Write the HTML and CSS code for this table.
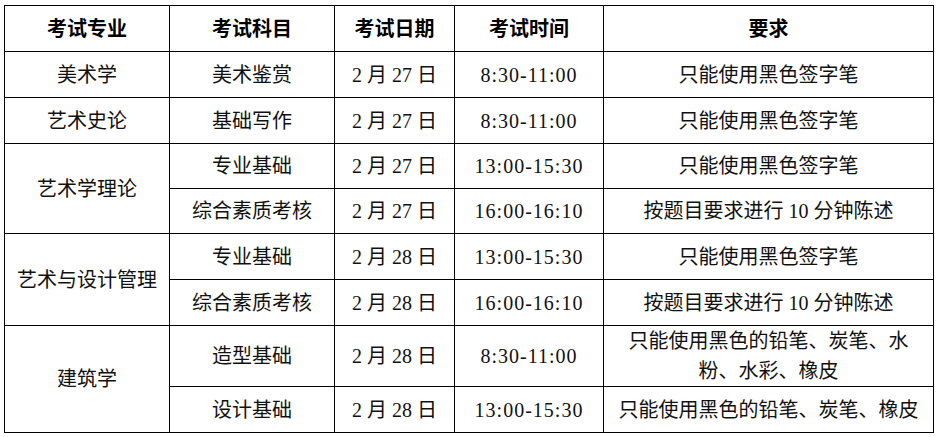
FILE: index.html
```html
<!DOCTYPE html>
<html lang="zh-CN">
<head>
<meta charset="utf-8">
<title>考试安排</title>
<link rel="stylesheet" href="styles.css">
</head>
<body>
<table class="exam">
  <colgroup>
    <col class="c-major">
    <col class="c-subject">
    <col class="c-date">
    <col class="c-time">
    <col class="c-req">
  </colgroup>
  <thead>
    <tr class="r-head">
      <th>考试专业</th>
      <th>考试科目</th>
      <th>考试日期</th>
      <th>考试时间</th>
      <th>要求</th>
    </tr>
  </thead>
  <tbody>
    <tr class="r-46">
      <td>美术学</td>
      <td>美术鉴赏</td>
      <td>2 月 27 日</td>
      <td class="time">8:30-11:00</td>
      <td>只能使用黑色签字笔</td>
    </tr>
    <tr class="r-46">
      <td>艺术史论</td>
      <td>基础写作</td>
      <td>2 月 27 日</td>
      <td class="time">8:30-11:00</td>
      <td>只能使用黑色签字笔</td>
    </tr>
    <tr class="r-45">
      <td rowspan="2">艺术学理论</td>
      <td>专业基础</td>
      <td>2 月 27 日</td>
      <td class="time">13:00-15:30</td>
      <td>只能使用黑色签字笔</td>
    </tr>
    <tr class="r-45">
      <td>综合素质考核</td>
      <td>2 月 27 日</td>
      <td class="time">16:00-16:10</td>
      <td>按题目要求进行 10 分钟陈述</td>
    </tr>
    <tr class="r-46">
      <td rowspan="2">艺术与设计管理</td>
      <td>专业基础</td>
      <td>2 月 28 日</td>
      <td class="time">13:00-15:30</td>
      <td>只能使用黑色签字笔</td>
    </tr>
    <tr class="r-46">
      <td>综合素质考核</td>
      <td>2 月 28 日</td>
      <td class="time">16:00-16:10</td>
      <td>按题目要求进行 10 分钟陈述</td>
    </tr>
    <tr class="r-60">
      <td rowspan="2">建筑学</td>
      <td>造型基础</td>
      <td>2 月 28 日</td>
      <td class="time">8:30-11:00</td>
      <td class="two-line">只能使用黑色的铅笔、炭笔、水<br>粉、水彩、橡皮</td>
    </tr>
    <tr class="r-46">
      <td>设计基础</td>
      <td>2 月 28 日</td>
      <td class="time">13:00-15:30</td>
      <td>只能使用黑色的铅笔、炭笔、橡皮</td>
    </tr>
  </tbody>
</table>
</body>
</html>
```

FILE: styles.css
```css
html, body {
  margin: 0;
  padding: 0;
  background: #ffffff;
}

body {
  font-family: "Liberation Serif", "Noto Sans CJK SC", serif;
  color: #111111;
}

.exam {
  margin: 5px 0 0 4px;
  border-collapse: collapse;
  table-layout: fixed;
  width: 930px;
  font-size: 20px;
}

.c-major { width: 165px; }
.c-subject { width: 165px; }
.c-date { width: 120px; }
.c-time { width: 149px; }
.c-req { width: 330px; }

.exam th,
.exam td {
  border: 1px solid #000000;
  padding: 0;
  text-align: center;
  vertical-align: middle;
  line-height: 26px;
  white-space: nowrap;
}

.exam th {
  font-weight: 700;
  color: #000000;
}

.r-head { height: 46px; }
.r-46 { height: 46px; }
.r-45 { height: 45px; }
.r-60 { height: 60px; }

.exam td.time {
  letter-spacing: 1px;
}

.exam td.two-line {
  line-height: 30px;
}
```
